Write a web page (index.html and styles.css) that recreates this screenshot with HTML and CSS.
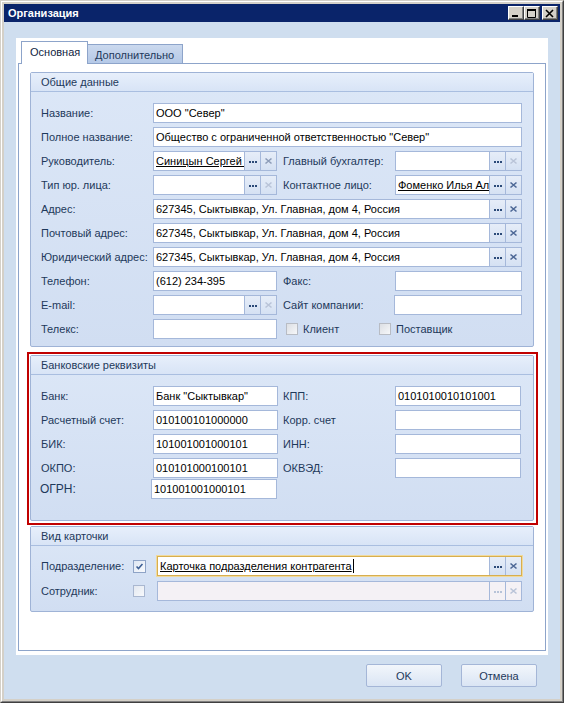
FILE: index.html
```html
<!DOCTYPE html>
<html lang="ru">
<head>
<meta charset="utf-8">
<title>Организация</title>
<link rel="stylesheet" href="styles.css">
</head>
<body>
<div class="window">
  <div class="frame">
    <div class="titlebar">
      <span class="title">Организация</span>
      <div class="tb-btns">
        <div class="tb-btn"><svg width="10" height="9" viewBox="0 0 10 9"><rect x="1" y="6" width="6" height="2" fill="#000"/></svg></div>
        <div class="tb-btn"><svg width="10" height="9" viewBox="0 0 10 9"><path d="M0.5 1.5H8.5V8.5H0.5Z" fill="none" stroke="#000"/><rect x="0" y="0" width="9" height="2" fill="#000"/></svg></div>
        <div class="tb-btn close"><svg width="10" height="9" viewBox="0 0 10 9"><path d="M1 1L8 8M8 1L1 8" stroke="#000" stroke-width="1.6"/></svg></div>
      </div>
    </div>
    <div class="client">
      <div class="panel">
        <div class="tabs">
          <div class="tab active">Основная</div>
          <div class="tab">Дополнительно</div>
        </div>
        <div class="tab-body">
          <section class="group">
            <div class="group-head">Общие данные</div>
            <div class="form">
              <div class="lbl">Название:</div>
              <div class="fld wide inp">ООО "Север"</div>

              <div class="lbl">Полное название:</div>
              <div class="fld wide inp">Общество с ограниченной ответственностью "Север"</div>

              <div class="lbl">Руководитель:</div>
              <div class="fld combo"><div class="val"><span class="link">Синицын Сергей Петрович</span></div><div class="b dots"></div><div class="b x mid"><svg width="15" height="18" viewBox="0 0 15 18"><path d="M4.5 6.5L10.5 11.5M10.5 6.5L4.5 11.5"/></svg></div></div>
              <div class="lbl r">Главный бухгалтер:</div>
              <div class="fld r combo"><div class="val"></div><div class="b dots"></div><div class="b x off"><svg width="15" height="18" viewBox="0 0 15 18"><path d="M4.5 6.5L10.5 11.5M10.5 6.5L4.5 11.5"/></svg></div></div>

              <div class="lbl">Тип юр. лица:</div>
              <div class="fld combo"><div class="val"></div><div class="b dots"></div><div class="b x off"><svg width="15" height="18" viewBox="0 0 15 18"><path d="M4.5 6.5L10.5 11.5M10.5 6.5L4.5 11.5"/></svg></div></div>
              <div class="lbl r">Контактное лицо:</div>
              <div class="fld r combo"><div class="val"><span class="link">Фоменко Илья Алексеевич</span></div><div class="b dots"></div><div class="b x"><svg width="15" height="18" viewBox="0 0 15 18"><path d="M4.5 6.5L10.5 11.5M10.5 6.5L4.5 11.5"/></svg></div></div>

              <div class="lbl">Адрес:</div>
              <div class="fld wide combo"><div class="val">627345, Сыктывкар, Ул. Главная, дом 4, Россия</div><div class="b dots"></div><div class="b x"><svg width="15" height="18" viewBox="0 0 15 18"><path d="M4.5 6.5L10.5 11.5M10.5 6.5L4.5 11.5"/></svg></div></div>

              <div class="lbl">Почтовый адрес:</div>
              <div class="fld wide combo"><div class="val">627345, Сыктывкар, Ул. Главная, дом 4, Россия</div><div class="b dots"></div><div class="b x"><svg width="15" height="18" viewBox="0 0 15 18"><path d="M4.5 6.5L10.5 11.5M10.5 6.5L4.5 11.5"/></svg></div></div>

              <div class="lbl">Юридический адрес:</div>
              <div class="fld wide combo"><div class="val">627345, Сыктывкар, Ул. Главная, дом 4, Россия</div><div class="b dots"></div><div class="b x"><svg width="15" height="18" viewBox="0 0 15 18"><path d="M4.5 6.5L10.5 11.5M10.5 6.5L4.5 11.5"/></svg></div></div>

              <div class="lbl">Телефон:</div>
              <div class="fld inp">(612) 234-395</div>
              <div class="lbl r">Факс:</div>
              <div class="fld r inp"></div>

              <div class="lbl">E-mail:</div>
              <div class="fld combo"><div class="val"></div><div class="b dots"></div><div class="b x off"><svg width="15" height="18" viewBox="0 0 15 18"><path d="M4.5 6.5L10.5 11.5M10.5 6.5L4.5 11.5"/></svg></div></div>
              <div class="lbl r">Сайт компании:</div>
              <div class="fld r inp site"></div>

              <div class="lbl">Телекс:</div>
              <div class="fld inp"></div>
              <div class="checks">
                <label class="chk first"><span class="cb dis"></span>Клиент</label>
                <label class="chk"><span class="cb dis"></span>Поставщик</label>
              </div>
            </div>
          </section>

          <div class="highlight">
            <section class="group">
              <div class="group-head">Банковские реквизиты</div>
              <div class="form bank">
                <div class="lbl">Банк:</div>
                <div class="fld inp">Банк "Сыктывкар"</div>
                <div class="lbl r">КПП:</div>
                <div class="fld r inp">0101010010101001</div>

                <div class="lbl">Расчетный счет:</div>
                <div class="fld inp">010100101000000</div>
                <div class="lbl r">Корр. счет</div>
                <div class="fld r inp"></div>

                <div class="lbl">БИК:</div>
                <div class="fld inp">101001001000101</div>
                <div class="lbl r">ИНН:</div>
                <div class="fld r inp"></div>

                <div class="lbl">ОКПО:</div>
                <div class="fld inp">010101000100101</div>
                <div class="lbl r">ОКВЭД:</div>
                <div class="fld r inp"></div>

                <div class="lbl ogrn">ОГРН:</div>
                <div class="fld inp ogrn">101001001000101</div>
              </div>
            </section>
          </div>

          <section class="group">
            <div class="group-head">Вид карточки</div>
            <div class="form kind">
              <div class="lbl">Подразделение:</div>
              <span class="cb on"><svg width="13" height="13" viewBox="0 0 13 13"><path d="M3 6.5L5.3 9L10 3.5" fill="none" stroke="#3d5f94" stroke-width="1.8"/></svg></span>
              <div class="combo focus"><div class="val"><span class="link">Карточка подразделения контрагента</span><span class="caret"></span></div><div class="b dots"></div><div class="b x"><svg width="15" height="18" viewBox="0 0 15 18"><path d="M4.5 6.5L10.5 11.5M10.5 6.5L4.5 11.5"/></svg></div></div>

              <div class="lbl">Сотрудник:</div>
              <span class="cb"></span>
              <div class="combo disabled"><div class="val"></div><div class="b dots"></div><div class="b x off"><svg width="15" height="18" viewBox="0 0 15 18"><path d="M4.5 6.5L10.5 11.5M10.5 6.5L4.5 11.5"/></svg></div></div>
            </div>
          </section>
        </div>
      </div>
      <div class="footer">
        <button class="btn" type="button">OK</button>
        <button class="btn" type="button">Отмена</button>
      </div>
    </div>
  </div>
</div>
</body>
</html>
```

FILE: styles.css
```css
* { box-sizing: border-box; }
html, body { margin: 0; padding: 0; }
body {
  width: 564px;
  height: 703px;
  overflow: hidden;
  background: #d4d0c8;
  font-family: "Liberation Sans", Arial, sans-serif;
  font-size: 11px;
  color: #1e395b;
}
.window {
  width: 564px;
  height: 703px;
  display: flex;
  border: 1px solid;
  border-color: #d4d0c8 #404040 #404040 #d4d0c8;
}
.frame {
  flex: 1;
  display: flex;
  flex-direction: column;
  border: 1px solid;
  border-color: #ffffff #808080 #808080 #ffffff;
  padding: 2px;
  background: #d4d0c8;
}
.titlebar {
  height: 18px;
  background: #0a246a;
  display: flex;
  align-items: center;
  padding: 0 2px 0 4px;
}
.title {
  flex: 1;
  color: #fff;
  font-weight: bold;
  font-size: 11px;
}
.tb-btns { display: flex; }
.tb-btn {
  width: 16px;
  height: 14px;
  background: #d4d0c8;
  border: 1px solid;
  border-color: #ffffff #404040 #404040 #ffffff;
  box-shadow: inset -1px -1px 0 #808080;
  display: flex;
  align-items: center;
  justify-content: center;
}
.tb-btn svg { display: block; }
.tb-btn.close { margin-left: 2px; }

.client {
  flex: 1;
  display: flex;
  flex-direction: column;
  background: #cfdeef;
  padding: 16px 12px 0;
}
.panel {
  height: 617px;
  background: #fff;
  padding: 3px 2px 4px;
  display: flex;
  flex-direction: column;
}
.tabs {
  height: 22px;
  display: flex;
  align-items: flex-end;
  padding-left: 3px;
}
.tab {
  width: 95px;
  height: 19px;
  padding: 1px 0 0 7px;
  border: 1px solid #8da4ca;
  border-left: none;
  border-bottom: none;
  background: linear-gradient(#cbd9ee, #b5c9e7);
  display: flex;
  align-items: center;
  color: #1e395b;
}
.tab.active {
  width: 67px;
  height: 23px;
  margin-bottom: -1px;
  padding: 0 0 2px 8px;
  border-left: 1px solid #8da4ca;
  background: #fff;
  position: relative;
  z-index: 1;
  color: #10243f;
}
.tab-body {
  flex: 1;
  border: 1px solid #8da4ca;
  padding: 8px 11px;
}

.group {
  border: 1px solid #9fb3d6;
  border-radius: 2px;
  background: linear-gradient(#dce7f7, #d1def2);
}
.group-head {
  height: 19px;
  border-bottom: 1px solid #a9bee0;
  background: linear-gradient(#e7effb, #d8e4f6);
  padding-left: 10px;
  display: flex;
  align-items: center;
}
.highlight {
  margin: 5px -4px 1px -3px;
  border: 2px solid #c00000;
  padding: 1px 2px 2px 1px;
}

.form {
  display: grid;
  grid-template-columns: 112px 124px 6px 112px 127px;
  grid-auto-rows: 20px;
  row-gap: 4px;
  padding: 11px 0 7px 10px;
}
.form.bank { padding-bottom: 18px; grid-template-columns: 112px 125px 5px 112px 126px; }
.form.kind {
  grid-template-columns: 92px 24px 365px;
  row-gap: 5px;
  padding: 10px 0 10px 10px;
}
.lbl {
  grid-column: 1;
  display: flex;
  align-items: center;
  white-space: nowrap;
}
.lbl.r { grid-column: 4; }
.fld { grid-column: 2; }
.fld.r { grid-column: 5; }
.fld.wide { grid-column: 2 / 6; }
.fld.site { margin-left: -1px; }
.lbl.ogrn {
  margin: -3px 0 3px -1px;
  font-size: 12px;
}
.fld.ogrn { margin: -3px 1px 3px -2px; }

.inp {
  height: 20px;
  background: #fff;
  border: 1px solid #a5b8da;
  padding-left: 2px;
  display: flex;
  align-items: center;
  white-space: nowrap;
  overflow: hidden;
  color: #000;
}
.combo {
  height: 20px;
  display: flex;
  background: #fff;
  border: 1px solid #a5b8da;
}
.combo .val {
  flex: 1;
  min-width: 0;
  padding-left: 2px;
  display: flex;
  align-items: center;
  white-space: nowrap;
  overflow: hidden;
  color: #000;
}
.combo .b {
  width: 16px;
  flex: none;
  border-left: 1px solid #a5b8da;
  background: linear-gradient(#e6edf8, #d5e1f3);
  display: flex;
  align-items: center;
  justify-content: center;
}
.b.dots::before {
  content: "";
  width: 2px;
  height: 2px;
  margin-top: 1px;
  background: #2b4a78;
  box-shadow: 3px 0 0 #2b4a78, -3px 0 0 #2b4a78;
}
.b.x svg { display: block; }
.b.x path { stroke: #4d6896; stroke-width: 1.6; fill: none; }
.b.x.mid path { stroke: #8c9cb8; }
.b.x.off path { stroke: #b9c4d8; }
.link {
  text-decoration: underline;
  color: #000;
}
.caret {
  width: 1px;
  height: 14px;
  background: #000;
  margin-left: 1px;
}
.combo.focus {
  border-color: #d7ae4f;
  box-shadow: 0 0 0 1px #f1da9c;
}
.combo.disabled,
.combo.disabled .b {
  background: #f4f1f5;
}
.combo.disabled .b.dots::before {
  background: #b7c3d8;
  box-shadow: 3px 0 0 #b7c3d8, -3px 0 0 #b7c3d8;
}

.checks {
  grid-column: 4 / 6;
  display: flex;
  align-items: center;
  padding-left: 3px;
}
.chk {
  display: flex;
  align-items: center;
  gap: 5px;
}
.chk.first { width: 93px; }
.cb {
  width: 12px;
  height: 12px;
  flex: none;
  align-self: center;
  border: 1px solid #a9b7d0;
  background: linear-gradient(135deg, #e3e8f0, #f7f9fc);
  display: flex;
  align-items: center;
  justify-content: center;
}
.cb svg { display: block; }
.cb.dis {
  border-color: #b8bcc4;
  background: linear-gradient(135deg, #dcdfe4, #f6f7f9);
}
.cb.on {
  width: 13px;
  height: 13px;
  border-color: #8ea3c6;
  background: linear-gradient(135deg, #dfe7f3, #f8fafd);
}

.footer {
  display: flex;
  justify-content: flex-end;
  gap: 19px;
  padding: 9px 11px 0 0;
}
.btn {
  width: 76px;
  height: 23px;
  border: 1px solid #a4b6d7;
  border-radius: 2px;
  background: linear-gradient(#f2f6fb, #dae5f4);
  font-family: inherit;
  font-size: 11px;
  color: #1e395b;
  padding: 0;
}
```
